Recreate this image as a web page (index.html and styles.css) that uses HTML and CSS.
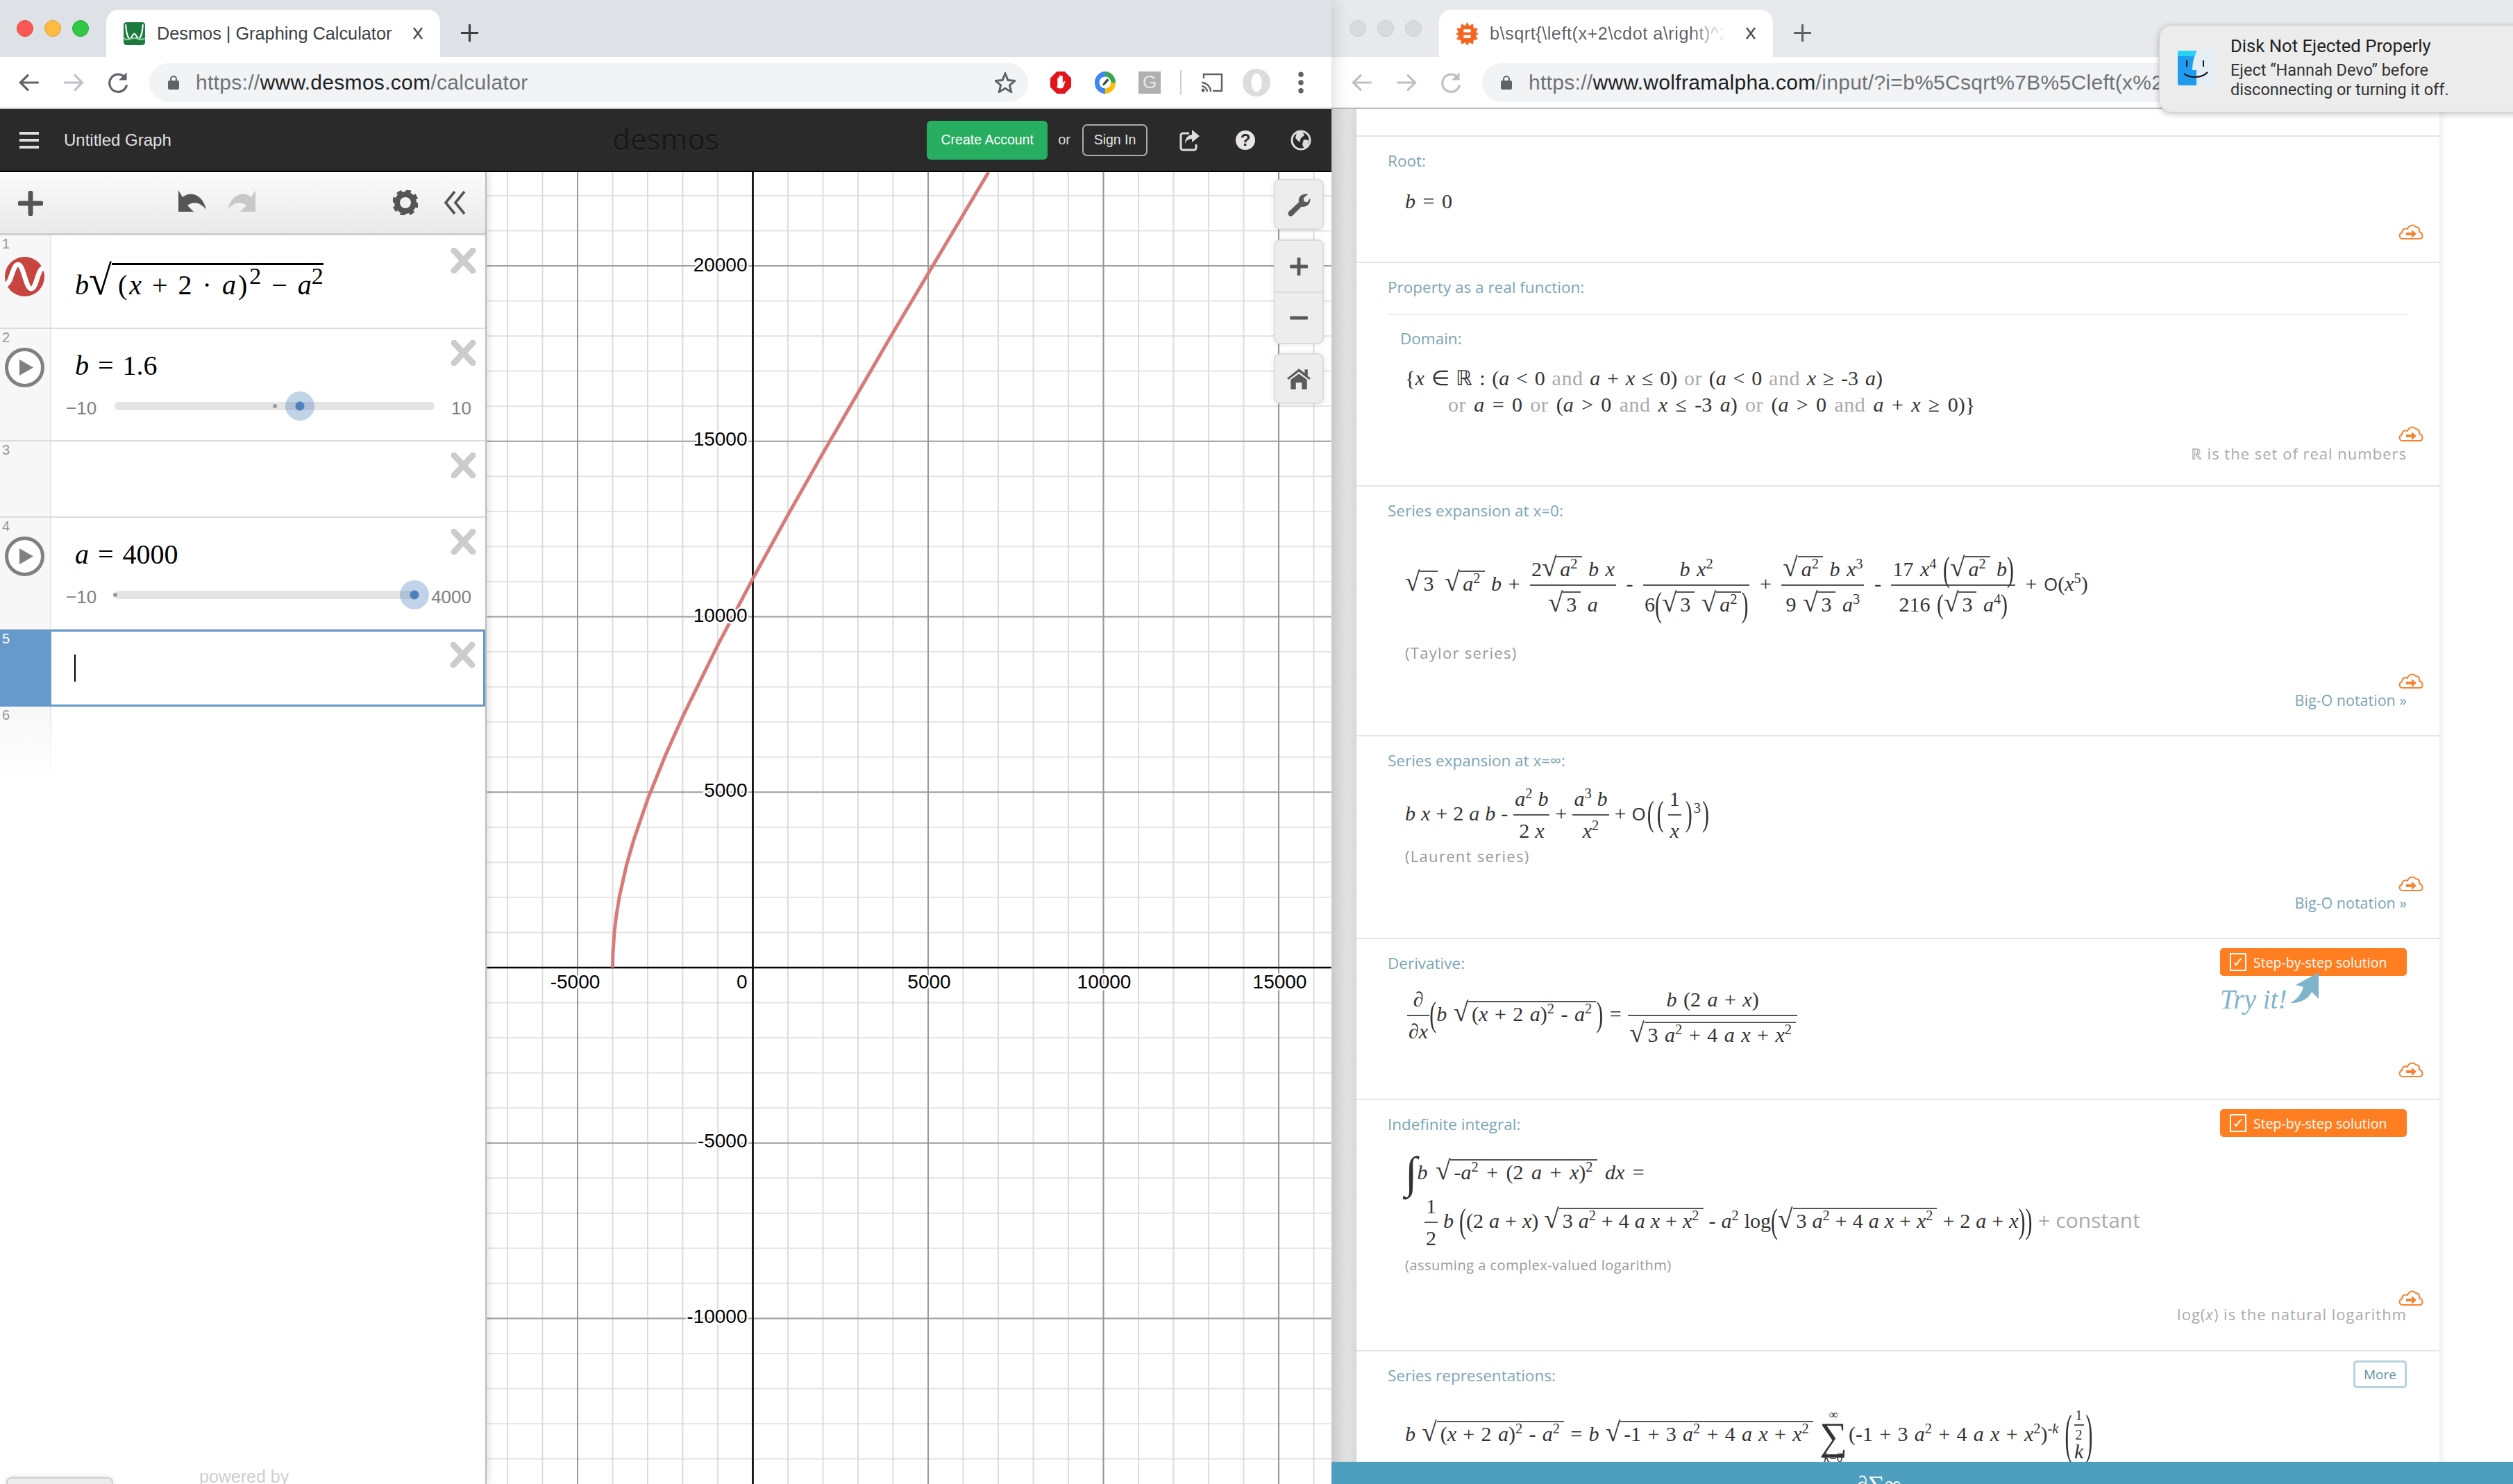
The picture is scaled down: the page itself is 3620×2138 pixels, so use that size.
FILE: index.html
```html
<!DOCTYPE html>
<html lang="en">
<head>
    <meta charset="UTF-8">
    <title>Desmos | Graphing Calculator</title>
    <link rel="stylesheet" href="styles.css">
</head>
<body>
<div class="screen">

    <!-- left browser window: desmos -->
    <div class="window win-left">
        <div class="tabstrip">
            <div class="lights">
                <span class="light red"></span><span class="light amber"></span><span class="light green"></span>
            </div>
            <div class="tab">
                <svg class="favicon" viewBox="0 0 32 32"><rect x="1" width="30" height="32" rx="4" fill="#1c7a3e"/><path d="M4 3c1 16 4 20 6 20s4-7 6-7 4 7 6 7 5-6 6-20" fill="none" stroke="#fff" stroke-width="2"/><path d="M1 22c6 5 10 0 15 0s9 5 15 0" fill="none" stroke="#8fd0a5" stroke-width="2"/></svg>
                <span class="tab-title">Desmos | Graphing Calculator</span>
                <svg class="tab-close" viewBox="0 0 16 20"><path d="M2 2l12 16M14 2L2 18" stroke="#4a4d51" stroke-width="2.4"/></svg>
            </div>
            <svg class="tab-new" viewBox="0 0 24 24"><path d="M12 0v24M0 12h24" stroke="#3c4043" stroke-width="3"/></svg>
        </div>
        <div class="toolbar">
            <span class="tb-btn"><svg viewBox="0 0 28 28"><path d="M26 14H4M13 4L3 14l10 10" class="nav-line"/></svg></span>
            <span class="tb-btn"><svg viewBox="0 0 28 28"><path d="M2 14h22M15 4l10 10-10 10" class="nav-line off"/></svg></span>
            <span class="tb-btn"><svg viewBox="0 0 28 28"><path d="M23 8a11 11 0 1 0 2 9" class="nav-line"/><path d="M25 1v10H15z" fill="#5f6368"/></svg></span>
            <div class="omnibox">
                <svg class="lock" viewBox="0 0 16 22"><path d="M4 9V6a4 4 0 0 1 8 0v3" fill="none" stroke="#5f6368" stroke-width="2"/><rect y="8" width="16" height="13" rx="2" fill="#5f6368"/></svg>
                <span class="url"><span class="dim">https://</span>www.desmos.com<span class="dim">/calculator</span></span>
                <svg class="star" viewBox="0 0 30 30"><path d="M15 2l4 9.500 10 .8-7.600 6.500 2.300 9.700L15 23.300l-8.700 5.200 2.300-9.700L1 12.300l10-.8z" fill="none" stroke="#5f6368" stroke-width="3"/></svg>
            </div>
            <span class="tb-btn first"><svg viewBox="0 0 32 34"><path d="M10 0h12l10 10v14L22 34H10L0 24V10z" fill="#e2141c"/><path d="M11 22V10h2v7-10h2v10-11h2v11-10h2v11l2-3h2l-3 9c-1 3-10 3-10-2z" fill="#fff"/></svg></span>
            <span class="tb-btn"><svg viewBox="0 0 32 34"><path d="M16 0a16 17 0 0 1 16 17H20a4 4 0 0 0-4-4z" fill="#35a853"/><path d="M32 17a16 17 0 0 1-16 17V21a4 4 0 0 0 4-4z" fill="#fbbc05"/><path d="M16 34A16 17 0 0 1 16 0v13a4 4 0 0 0 0 8z" fill="#4285f4"/><circle cx="16" cy="17" r="9" fill="#fff"/><path d="M12 22l1-4 6-7 3 2-6 7z" fill="#444"/></svg></span>
            <span class="tb-btn"><span class="ext-g">G</span></span>
            <span class="tb-sep"></span>
            <span class="tb-btn"><svg viewBox="0 0 32 28"><path d="M4 8V2h26v24H17" fill="none" stroke="#5f6368" stroke-width="2.400"/><path d="M1 14c7 0 13 6 13 13M1 19c4 0 8 4 8 8" fill="none" stroke="#5f6368" stroke-width="2.400"/><circle cx="3" cy="25" r="2.500" fill="#5f6368"/></svg></span>
            <span class="tb-btn"><span class="avatar"></span></span>
            <span class="tb-btn"><svg viewBox="0 0 8 30"><circle cx="4" cy="4" r="3.500" fill="#5f6368"/><circle cx="4" cy="15" r="3.500" fill="#5f6368"/><circle cx="4" cy="26" r="3.500" fill="#5f6368"/></svg></span>
        </div>

        <div class="dcg-header">
            <div class="dcg-left">
                <span class="burger"><i></i><i></i><i></i></span>
                <span class="graph-title">Untitled Graph</span>
            </div>
            <div class="dcg-logo">desmos</div>
            <div class="dcg-right">
                <span class="btn-create">Create Account</span>
                <span class="or">or</span>
                <span class="btn-signin">Sign In</span>
                <span class="head-icon"><svg viewBox="0 0 30 32"><path d="M14 6H5a3 3 0 0 0-3 3v18a3 3 0 0 0 3 3h16a3 3 0 0 0 3-3v-5" fill="none" stroke="#ddd" stroke-width="3"/><path d="M18 1l11 9-11 9v-5c-5 0-8 2-10 7 0-8 4-12 10-13z" fill="#ddd"/></svg></span>
                <span class="head-icon"><span class="help">?</span></span>
                <span class="head-icon"><svg viewBox="0 0 30 32"><circle cx="15" cy="16" r="13" fill="none" stroke="#ddd" stroke-width="3"/><path d="M9 5l8-2 3 6-5 4-2 6-6-6zM19 15l7 1-1 8-5 5-3-7z" fill="#ddd"/></svg></span>
            </div>
        </div>

        <div class="dcg-main">
            <div class="panel">
                <div class="panel-head">
                    <svg class="ph-icon plus" viewBox="0 0 36 36"><path d="M18 3v30M3 18h30" stroke="#555" stroke-width="7" stroke-linecap="round"/></svg>
                    <svg class="ph-icon undo" viewBox="0 0 42 36"><path d="M1 4l0 31h22L14 26c8-6 18-5 27 6C37 14 22 3 7 14z" fill="#555" transform="translate(0 -2)"/></svg>
                    <svg class="ph-icon redo" viewBox="0 0 42 36"><path d="M41 4v31H19l9-9C20 20 10 21 1 32 5 14 20 3 35 14z" fill="#c8c8c8" transform="translate(0 -2)"/></svg>
                    <svg class="ph-icon gear" viewBox="0 0 36 36"><circle cx="18" cy="18" r="12" fill="none" stroke="#555" stroke-width="8"/><circle cx="18" cy="18" r="16" fill="none" stroke="#555" stroke-width="6" stroke-dasharray="7 5.570"/></svg>
                    <svg class="ph-icon fold" viewBox="0 0 32 36"><path d="M16 2L3 18l13 16M30 2L17 18l13 16" fill="none" stroke="#555" stroke-width="3.600"/></svg>
                </div>

                <div class="row row-first">
                    <div class="num-col"><span class="num">1</span>
                        <svg class="row-icon" viewBox="0 0 57 57"><circle cx="28.500" cy="28.500" r="28.500" fill="#c74440"/><path d="M1 40C9 40 11 11 19 11S30 46 38 46 47 16 56 16" fill="none" stroke="#fff" stroke-width="7"/></svg>
                    </div>
                    <div class="row-body">
                        <div class="row-main">
                            <div class="expr expr-root"><i>b</i><span class="rad rad-big"><b>√</b><span class="rc"><span class="bp">(</span><i>x</i> + 2 · <i>a</i><span class="bp">)</span><sup>2</sup> − <i>a</i><sup>2</sup></span></span></div>
                            <svg class="close" viewBox="0 0 37 37"><path d="M5 4l27 29M32 4L5 33" stroke="#ccc" stroke-width="9" stroke-linecap="round"/></svg>
                        </div>
                    </div>
                </div>

                <div class="row">
                    <div class="num-col"><span class="num">2</span>
                        <svg class="row-icon" viewBox="0 0 57 57"><circle cx="28.500" cy="28.500" r="26" fill="#fff" stroke="#808080" stroke-width="5"/><path d="M21 17v23l20-11.500z" fill="#808080"/></svg>
                    </div>
                    <div class="row-body">
                        <div class="row-main">
                            <div class="expr"><i>b</i> = 1.6</div>
                            <svg class="close" viewBox="0 0 37 37"><path d="M5 4l27 29M32 4L5 33" stroke="#ccc" stroke-width="9" stroke-linecap="round"/></svg>
                        </div>
                        <div class="slider">
                            <span class="limit limit-min">−10</span>
                            <div class="track">
                                <span class="tick" style="left: 50%"></span>
                                <span class="thumb" style="left: 58%"></span>
                            </div>
                            <span class="limit">10</span>
                        </div>
                    </div>
                </div>

                <div class="row row-empty">
                    <div class="num-col"><span class="num">3</span></div>
                    <div class="row-body">
                        <div class="row-main">
                            <div class="expr"></div>
                            <svg class="close" viewBox="0 0 37 37"><path d="M5 4l27 29M32 4L5 33" stroke="#ccc" stroke-width="9" stroke-linecap="round"/></svg>
                        </div>
                    </div>
                </div>

                <div class="row">
                    <div class="num-col"><span class="num">4</span>
                        <svg class="row-icon" viewBox="0 0 57 57"><circle cx="28.500" cy="28.500" r="26" fill="#fff" stroke="#808080" stroke-width="5"/><path d="M21 17v23l20-11.500z" fill="#808080"/></svg>
                    </div>
                    <div class="row-body">
                        <div class="row-main">
                            <div class="expr"><i>a</i> = 4000</div>
                            <svg class="close" viewBox="0 0 37 37"><path d="M5 4l27 29M32 4L5 33" stroke="#ccc" stroke-width="9" stroke-linecap="round"/></svg>
                        </div>
                        <div class="slider">
                            <span class="limit limit-min">−10</span>
                            <div class="track track-short">
                                <span class="tick" style="left: 0.25%"></span>
                                <span class="thumb" style="left: 100%"></span>
                            </div>
                            <span class="limit">4000</span>
                        </div>
                    </div>
                </div>

                <div class="row row-active">
                    <div class="num-col"><span class="num">5</span></div>
                    <div class="row-body">
                        <div class="row-main">
                            <div class="expr"><span class="caret"></span></div>
                            <svg class="close" viewBox="0 0 37 37"><path d="M5 4l27 29M32 4L5 33" stroke="#ccc" stroke-width="9" stroke-linecap="round"/></svg>
                        </div>
                    </div>
                </div>

                <div class="row row-ghost">
                    <div class="num-col"><span class="num">6</span></div>
                </div>

                <div class="panel-foot">
                    <span class="foot-btn"></span>
                    <span class="powered">powered by</span>
                </div>
            </div>

            <div class="graph">
                <svg class="plot" viewBox="702 248 1216 1890">
                    <defs>
                        <pattern id="minor" x="1084" y="1393" width="50.500" height="50.550" patternUnits="userSpaceOnUse">
                            <rect width="50.500" height="2" fill="#e4e4e4"/>
                            <rect width="2" height="50.550" fill="#dcdcdc"/>
                        </pattern>
                        <pattern id="major" x="1084" y="1393" width="252.500" height="252.750" patternUnits="userSpaceOnUse">
                            <rect width="252.500" height="2" fill="#a0a0a0"/>
                            <rect width="2" height="252.750" fill="#989898"/>
                        </pattern>
                    </defs>
                    <rect x="702" y="248" width="1216" height="1890" fill="#fff"/>
                    <rect x="702" y="248" width="1216" height="1890" fill="url(#minor)"/>
                    <rect x="702" y="248" width="1216" height="1890" fill="url(#major)"/>
                    <path d="M1085 248V2138M702 1394H1918" stroke="#000" stroke-width="2.500"/>
                    <polyline class="curve" points="883,1394 883.500,1371 885.500,1342.700 888,1321.200 893,1290.400 903.200,1245.700 913.300,1210.300 933.500,1151.400 958.800,1088.700 984,1032.300 1034.500,929.400 1085,833.700 1135.500,741.900 1186,652.700 1287,479 1424.500,248"/>
                    <g class="ticks-y">
                        <text x="1077" y="391">20000</text>
                        <text x="1077" y="642">15000</text>
                        <text x="1077" y="896">10000</text>
                        <text x="1077" y="1148">5000</text>
                        <text x="1077" y="1424">0</text>
                        <text x="1077" y="1653">-5000</text>
                        <text x="1077" y="1906">-10000</text>
                    </g>
                    <g class="ticks-x">
                        <text x="829" y="1424">-5000</text>
                        <text x="1339" y="1424">5000</text>
                        <text x="1591" y="1424">10000</text>
                        <text x="1844" y="1424">15000</text>
                    </g>
                </svg>
                <div class="tools">
                    <div class="tool tool-wrench">
                        <svg viewBox="0 0 36 36"><path d="M2 29L18 14C16 6 23 0 32 2L25 8l1 5 5 1 4-6c2 8-5 14-13 13L8 35c-4 2-8-2-6-6z" fill="#5a5a5a"/></svg>
                    </div>
                    <div class="tool-group">
                        <div class="tool tool-half"><svg viewBox="0 0 26 26"><path d="M13 2v22M2 13h22" stroke="#5a5a5a" stroke-width="5" stroke-linecap="round"/></svg></div>
                        <div class="tool tool-half"><svg viewBox="0 0 26 26"><path d="M2 13h22" stroke="#5a5a5a" stroke-width="5" stroke-linecap="round"/></svg></div>
                    </div>
                    <div class="tool">
                        <svg viewBox="0 0 32 28"><path d="M0 13L16 0l8 6V1h4v9l4 3-2 2L16 4 2 15z" fill="#5a5a5a"/><path d="M5 15L16 7l11 8v13h-7v-9h-8v9H5z" fill="#5a5a5a"/></svg>
                    </div>
                </div>
            </div>
        </div>
    </div>

    <!-- right browser window: wolfram alpha -->
    <div class="window win-right">
        <div class="tabstrip tabstrip-off">
            <div class="lights lights-off">
                <span class="light"></span><span class="light"></span><span class="light"></span>
            </div>
            <div class="tab tab-wa">
                <svg class="favicon" viewBox="0 0 32 32"><path d="M16 0l3 5 5-3 1 6 6 1-3 5 4 2-4 3 3 5-6 1-1 6-5-3-3 5-3-5-5 3-1-6-6-1 3-5-4-3 4-2-3-5 6-1 1-6 5 3z" fill="#f4651f"/><path d="M11 10h10v4H11zM11 18h10v4H11z" fill="#fff"/></svg>
                <span class="tab-title tab-title-fade">b\sqrt{\left(x+2\cdot a\right)^2</span>
                <svg class="tab-close" viewBox="0 0 16 20"><path d="M2 2l12 16M14 2L2 18" stroke="#4a4d51" stroke-width="2.400"/></svg>
            </div>
            <svg class="tab-new" viewBox="0 0 24 24"><path d="M12 0v24M0 12h24" stroke="#5f6368" stroke-width="3"/></svg>
        </div>
        <div class="toolbar toolbar-off">
            <span class="tb-btn"><svg viewBox="0 0 28 28"><path d="M26 14H4M13 4L3 14l10 10" class="nav-line off"/></svg></span>
            <span class="tb-btn"><svg viewBox="0 0 28 28"><path d="M2 14h22M15 4l10 10-10 10" class="nav-line off"/></svg></span>
            <span class="tb-btn"><svg viewBox="0 0 28 28"><path d="M23 8a11 11 0 1 0 2 9" class="nav-line off"/><path d="M25 1v10H15z" fill="#bdc1c6"/></svg></span>
            <div class="omnibox">
                <svg class="lock" viewBox="0 0 16 22"><path d="M4 9V6a4 4 0 0 1 8 0v3" fill="none" stroke="#5f6368" stroke-width="2"/><rect y="8" width="16" height="13" rx="2" fill="#5f6368"/></svg>
                <span class="url"><span class="dim">https://</span>www.wolframalpha.com<span class="dim">/input/?i=b%5Csqrt%7B%5Cleft(x%2B2%5Ccdot%20a%5Cright)%5E2</span></span>
            </div>
        </div>

        <div class="notification">
            <svg class="finder" viewBox="0 0 52 50"><rect width="52" height="50" rx="3" fill="#e4eef6"/><path d="M3 0h24c-4 10-6 20-6 28h6l0 22H3a3 3 0 0 1-3-3V3a3 3 0 0 1 3-3z" fill="#1f9cf0"/><path d="M3 0h24l-2 8H0V3a3 3 0 0 1 3-3z" fill="#2bd0f5"/><path d="M13 14v9M37 14v9" stroke="#111" stroke-width="2"/><path d="M9 33c8 7 26 7 34-2" fill="none" stroke="#111" stroke-width="2"/></svg>
            <div class="notif-text">
                <div class="notif-title">Disk Not Ejected Properly</div>
                <div class="notif-body">Eject “Hannah Devo” before<br>disconnecting or turning it off.</div>
            </div>
        </div>

        <div class="wa-page">
            <div class="wa-card">
                <div class="pod pod-top"></div>

                <div class="pod pod-root">
                    <div class="pod-head"><span class="pod-label">Root:</span></div>
                    <div class="math math-root"><i>b</i> = 0</div>
                    <div class="pod-foot">
                        <svg class="cloud" viewBox="0 0 36 24"><path d="M6 23C1 23 0 16 5 14 5 9 10 7 13 9 15 3 22 2 25 6 30 6 31 11 30 13 36 15 36 23 30 23z" fill="none" stroke="#f7822f" stroke-width="2"/><path d="M11 14h8v-4l7 6-7 6v-4h-8z" fill="#f7822f"/></svg>
                    </div>
                </div>

                <div class="pod pod-prop">
                    <div class="pod-head"><span class="pod-label">Property as a real function:</span></div>
                    <div class="pod-rule"></div>
                    <div class="pod-label sub-label">Domain:</div>
                    <div class="math math-domain">{<i>x</i> ∈ ℝ : (<i>a</i> &lt; 0 <span class="word">and</span> <i>a</i> + <i>x</i> ≤ 0) <span class="word">or</span> (<i>a</i> &lt; 0 <span class="word">and</span> <i>x</i> ≥ -3 <i>a</i>)</div>
                    <div class="math math-domain math-indent"><span class="word">or</span> <i>a</i> = 0 <span class="word">or</span> (<i>a</i> &gt; 0 <span class="word">and</span> <i>x</i> ≤ -3 <i>a</i>) <span class="word">or</span> (<i>a</i> &gt; 0 <span class="word">and</span> <i>a</i> + <i>x</i> ≥ 0)}</div>
                    <div class="pod-foot">
                        <svg class="cloud" viewBox="0 0 36 24"><path d="M6 23C1 23 0 16 5 14 5 9 10 7 13 9 15 3 22 2 25 6 30 6 31 11 30 13 36 15 36 23 30 23z" fill="none" stroke="#f7822f" stroke-width="2"/><path d="M11 14h8v-4l7 6-7 6v-4h-8z" fill="#f7822f"/></svg>
                        <span class="note">ℝ is the set of real numbers</span>
                    </div>
                </div>

                <div class="pod pod-taylor">
                    <div class="pod-head"><span class="pod-label">Series expansion at x=0:</span></div>
                    <div class="math math-taylor">
                        <span class="rad"><b>√</b><span class="rc">3</span></span> <span class="rad"><b>√</b><span class="rc"><i>a</i><sup>2</sup></span></span> <i>b</i> +
                        <span class="frac"><span class="top"><span>2<span class="rad"><b>√</b><span class="rc"><i>a</i><sup>2</sup></span></span> <i>b x</i></span></span><span class="bot"><span><span class="rad"><b>√</b><span class="rc">3</span></span> <i>a</i></span></span></span>
                        -
                        <span class="frac"><span class="top"><span><i>b x</i><sup>2</sup></span></span><span class="bot"><span>6<span class="bp">(</span><span class="rad"><b>√</b><span class="rc">3</span></span> <span class="rad"><b>√</b><span class="rc"><i>a</i><sup>2</sup></span></span><span class="bp">)</span></span></span></span>
                        +
                        <span class="frac"><span class="top"><span><span class="rad"><b>√</b><span class="rc"><i>a</i><sup>2</sup></span></span> <i>b x</i><sup>3</sup></span></span><span class="bot"><span>9 <span class="rad"><b>√</b><span class="rc">3</span></span> <i>a</i><sup>3</sup></span></span></span>
                        -
                        <span class="frac"><span class="top"><span>17 <i>x</i><sup>4</sup> <span class="bp">(</span><span class="rad"><b>√</b><span class="rc"><i>a</i><sup>2</sup></span></span> <i>b</i><span class="bp">)</span></span></span><span class="bot"><span>216 <span class="bp-sm">(</span><span class="rad"><b>√</b><span class="rc">3</span></span> <i>a</i><sup>4</sup><span class="bp-sm">)</span></span></span></span>
                        + <span class="big-o">O</span>(<i>x</i><sup>5</sup>)
                    </div>
                    <div class="qualifier">(Taylor series)</div>
                    <div class="pod-foot">
                        <svg class="cloud" viewBox="0 0 36 24"><path d="M6 23C1 23 0 16 5 14 5 9 10 7 13 9 15 3 22 2 25 6 30 6 31 11 30 13 36 15 36 23 30 23z" fill="none" stroke="#f7822f" stroke-width="2"/><path d="M11 14h8v-4l7 6-7 6v-4h-8z" fill="#f7822f"/></svg>
                        <span class="note note-link">Big-O notation »</span>
                    </div>
                </div>

                <div class="pod pod-laurent">
                    <div class="pod-head"><span class="pod-label">Series expansion at x=∞:</span></div>
                    <div class="math math-laurent">
                        <i>b x</i> + 2 <i>a b</i> -
                        <span class="frac frac-sm"><span class="top"><span><i>a</i><sup>2</sup> <i>b</i></span></span><span class="bot"><span>2 <i>x</i></span></span></span>
                        +
                        <span class="frac frac-sm"><span class="top"><span><i>a</i><sup>3</sup> <i>b</i></span></span><span class="bot"><span><i>x</i><sup>2</sup></span></span></span>
                        + <span class="big-o">O</span><span class="bp">(</span><span class="bp">(</span><span class="frac frac-xs"><span class="top"><span>1</span></span><span class="bot"><span><i>x</i></span></span></span><span class="bp">)</span><sup>3</sup><span class="bp">)</span>
                    </div>
                    <div class="qualifier">(Laurent series)</div>
                    <div class="pod-foot">
                        <svg class="cloud" viewBox="0 0 36 24"><path d="M6 23C1 23 0 16 5 14 5 9 10 7 13 9 15 3 22 2 25 6 30 6 31 11 30 13 36 15 36 23 30 23z" fill="none" stroke="#f7822f" stroke-width="2"/><path d="M11 14h8v-4l7 6-7 6v-4h-8z" fill="#f7822f"/></svg>
                        <span class="note note-link">Big-O notation »</span>
                    </div>
                </div>

                <div class="pod pod-deriv">
                    <div class="pod-head">
                        <span class="pod-label">Derivative:</span>
                        <span class="step-btn"><span class="check">✓</span>Step-by-step solution</span>
                    </div>
                    <div class="deriv-row">
                        <div class="math math-deriv">
                            <span class="frac frac-xs"><span class="top"><span>∂</span></span><span class="bot"><span>∂<i>x</i></span></span></span><span class="bp">(</span><i>b</i> <span class="rad"><b>√</b><span class="rc">(<i>x</i> + 2 <i>a</i>)<sup>2</sup> - <i>a</i><sup>2</sup></span></span><span class="bp">)</span> =
                            <span class="frac frac-sm"><span class="top"><span><i>b</i> (2 <i>a</i> + <i>x</i>)</span></span><span class="bot"><span><span class="rad"><b>√</b><span class="rc">3 <i>a</i><sup>2</sup> + 4 <i>a x</i> + <i>x</i><sup>2</sup></span></span></span></span></span>
                        </div>
                        <div class="try-it">
                            <span>Try it!</span>
                            <svg class="try-arrow" viewBox="0 0 44 46"><path d="M42 0L9 18l11 3C18 30 10 40 1 44c13 1 27-6 31-16l10 10z" fill="#7fb4cc"/></svg>
                        </div>
                    </div>
                    <div class="pod-foot">
                        <svg class="cloud" viewBox="0 0 36 24"><path d="M6 23C1 23 0 16 5 14 5 9 10 7 13 9 15 3 22 2 25 6 30 6 31 11 30 13 36 15 36 23 30 23z" fill="none" stroke="#f7822f" stroke-width="2"/><path d="M11 14h8v-4l7 6-7 6v-4h-8z" fill="#f7822f"/></svg>
                    </div>
                </div>

                <div class="pod pod-integral">
                    <div class="pod-head">
                        <span class="pod-label">Indefinite integral:</span>
                        <span class="step-btn"><span class="check">✓</span>Step-by-step solution</span>
                    </div>
                    <div class="math math-int1"><span class="bigop">∫</span><i>b</i> <span class="rad"><b>√</b><span class="rc">-<i>a</i><sup>2</sup> + (2 <i>a</i> + <i>x</i>)<sup>2</sup></span></span> <i>dx</i> =</div>
                    <div class="math math-int2">
                        <span class="frac frac-sm"><span class="top"><span>1</span></span><span class="bot"><span>2</span></span></span> <i>b</i> <span class="bp">(</span>(2 <i>a</i> + <i>x</i>) <span class="rad"><b>√</b><span class="rc">3 <i>a</i><sup>2</sup> + 4 <i>a x</i> + <i>x</i><sup>2</sup></span></span> - <i>a</i><sup>2</sup> log<span class="bp">(</span><span class="rad"><b>√</b><span class="rc">3 <i>a</i><sup>2</sup> + 4 <i>a x</i> + <i>x</i><sup>2</sup></span></span> + 2 <i>a</i> + <i>x</i><span class="bp">)</span><span class="bp">)</span><span class="constant"> + constant</span>
                    </div>
                    <div class="qualifier qualifier-int">(assuming a complex-valued logarithm)</div>
                    <div class="pod-foot">
                        <svg class="cloud" viewBox="0 0 36 24"><path d="M6 23C1 23 0 16 5 14 5 9 10 7 13 9 15 3 22 2 25 6 30 6 31 11 30 13 36 15 36 23 30 23z" fill="none" stroke="#f7822f" stroke-width="2"/><path d="M11 14h8v-4l7 6-7 6v-4h-8z" fill="#f7822f"/></svg>
                        <span class="note note-log">log(<i>x</i>) is the natural logarithm</span>
                    </div>
                </div>

                <div class="pod pod-rep">
                    <div class="pod-head">
                        <span class="pod-label">Series representations:</span>
                        <span class="more-btn">More</span>
                    </div>
                    <div class="math math-rep">
                        <i>b</i> <span class="rad"><b>√</b><span class="rc">(<i>x</i> + 2 <i>a</i>)<sup>2</sup> - <i>a</i><sup>2</sup></span></span> = <i>b</i> <span class="rad"><b>√</b><span class="rc">-1 + 3 <i>a</i><sup>2</sup> + 4 <i>a x</i> + <i>x</i><sup>2</sup></span></span>
                        <span class="sum"><span class="sum-lim">∞</span><span class="sum-sign">∑</span><span class="sum-lim"><i>k</i>=0</span></span>(-1 + 3 <i>a</i><sup>2</sup> + 4 <i>a x</i> + <i>x</i><sup>2</sup>)<sup>-<i>k</i></sup> <span class="bp bp-tall">(</span><span class="binom"><span class="frac frac-tiny"><span class="top"><span>1</span></span><span class="bot"><span>2</span></span></span><i>k</i></span><span class="bp bp-tall">)</span>
                    </div>
                </div>
            </div>
        </div>

        <div class="wa-bar"><span class="wa-bar-logo">∂∑∞</span></div>
    </div>
</div>
</body>
</html>
```

FILE: styles.css
```css
* {
    margin: 0;
    padding: 0;
    box-sizing: border-box;
}

html, body {
    width: 3620px;
    height: 2138px;
    overflow: hidden;
    background: white;
}

body {
    font-family: 'Liberation Sans', Arial, sans-serif;
}

.screen {
    display: flex;
    width: 3620px;
    height: 2138px;
}

.window {
    display: flex;
    flex-direction: column;
    height: 100%;
    overflow: hidden;
}

.win-left {
    width: 1918px;
    flex: none;
    position: relative;
    z-index: 2;
    box-shadow: 0 0 24px rgba(0,0,0,0.18);
}

.win-right {
    flex: 1;
    position: relative;
    min-width: 0;
}

/* browser chrome */

.tabstrip {
    display: flex;
    align-items: flex-end;
    height: 82px;
    flex: none;
    background: #dee1e6;
}

.tabstrip-off {
    background: #e7e9ec;
}

.lights {
    display: flex;
    gap: 16px;
    width: 153px;
    height: 82px;
    padding: 29px 0 0 24px;
    flex: none;
}

.lights-off {
    width: 155px;
    padding-left: 26px;
}

.light {
    width: 24px;
    height: 24px;
    border-radius: 50%;
    background: #d9dadb;
    border: 1px solid #cfcfcf;
}

.light.red { background: #fc5753; border-color: #df4744; }
.light.amber { background: #fdbc40; border-color: #de9f34; }
.light.green { background: #33c748; border-color: #27aa35; }

.tab {
    display: flex;
    align-items: center;
    width: 481px;
    height: 68px;
    padding: 0 24px 0 24px;
    background: white;
    border-radius: 18px 18px 0 0;
    flex: none;
}

.favicon {
    width: 33px;
    height: 33px;
    flex: none;
    margin-right: 16px;
}

.tab-title {
    flex: 1;
    font-family: 'Liberation Sans', sans-serif;
    font-size: 25.300px;
    color: #3c4043;
    white-space: nowrap;
    overflow: hidden;
}

.tab-title-fade {
    color: #5f6368;
    letter-spacing: 0.500px;
    -webkit-mask-image: linear-gradient(90deg, black 85%, transparent 100%);
    mask-image: linear-gradient(90deg, black 85%, transparent 100%);
}

.tab-close {
    width: 16px;
    height: 20px;
    flex: none;
    margin-left: 28px;
}

.tab-new {
    width: 25px;
    height: 25px;
    margin: 0 0 22px 30px;
    flex: none;
}

.toolbar {
    display: flex;
    align-items: center;
    height: 75px;
    flex: none;
    padding: 0 12px 0 10px;
    background: white;
    border-bottom: 2px solid #c8c8c8;
    margin-top: 0;
}

.toolbar-off {
    padding-left: 12px;
    border-bottom-color: #bbb;
}

.tb-btn {
    display: flex;
    align-items: center;
    justify-content: center;
    width: 64px;
    height: 56px;
    flex: none;
}

.tb-btn svg {
    height: 32px;
    width: 32px;
}

.tb-btn.first {
    margin-left: 15px;
}

.tb-sep {
    width: 2px;
    height: 36px;
    margin: 0 12px;
    background: #d0d0d0;
    flex: none;
}

.nav-line {
    fill: none;
    stroke: #5f6368;
    stroke-width: 2.800;
}

.nav-line.off {
    stroke: #bdc1c6;
}

.omnibox {
    display: flex;
    align-items: center;
    flex: 1;
    min-width: 0;
    height: 56px;
    margin-left: 13px;
    padding: 0 18px 0 27px;
    background: #f1f3f4;
    border-radius: 28px;
    overflow: hidden;
}

.lock {
    width: 16px;
    height: 22px;
    flex: none;
    margin-right: 24px;
}

.url {
    flex: 1;
    font-size: 30px;
    letter-spacing: 0.300px;
    color: #202124;
    white-space: nowrap;
    overflow: hidden;
}

.url .dim {
    color: #6f7377;
}

.star {
    width: 30px;
    height: 30px;
    flex: none;
}

.ext-g {
    display: flex;
    align-items: center;
    justify-content: center;
    width: 32px;
    height: 32px;
    background: #b0b0b0;
    color: #e8e8e8;
    font-size: 26px;
}

.avatar {
    width: 40px;
    height: 40px;
    border-radius: 50%;
    background: radial-gradient(ellipse 8px 14px at 50% 50%, #fff 90%, #dcdcdc 100%);
}

/* desmos header */

.dcg-header {
    display: grid;
    grid-template-columns: 1fr auto 1fr;
    align-items: center;
    height: 91px;
    flex: none;
    background: #2a2a2a;
    border-bottom: 2px solid #000;
}

.dcg-left {
    display: flex;
    align-items: center;
}

.burger {
    display: flex;
    flex-direction: column;
    gap: 6px;
    width: 28px;
    margin: 0 36px 0 28px;
}

.burger i {
    display: block;
    height: 4px;
    background: #ddd;
}

.graph-title {
    font-size: 24px;
    color: #e0e0e0;
}

.dcg-logo {
    font-family: 'Open Sans', sans-serif;
    font-size: 42px;
    line-height: 50px;
    color: #181818;
    text-shadow: 0 1px 1px #3a3a3a;
    margin-top: -4px;
}

.dcg-right {
    display: flex;
    align-items: center;
    justify-content: flex-end;
    padding-right: 4px;
}

.btn-create {
    display: flex;
    align-items: center;
    justify-content: center;
    width: 174px;
    height: 56px;
    background: #27ae60;
    border-radius: 6px;
    color: white;
    font-size: 19.500px;
}

.or {
    margin: 0 17px 0 15px;
    font-size: 20px;
    color: #ddd;
}

.btn-signin {
    display: flex;
    align-items: center;
    justify-content: center;
    width: 94px;
    height: 46px;
    border: 2px solid #aaa;
    border-radius: 7px;
    color: #e6e6e6;
    font-size: 19.500px;
    margin-right: 21px;
}

.head-icon {
    display: flex;
    align-items: center;
    justify-content: center;
    width: 80px;
}

.head-icon svg {
    width: 30px;
    height: 32px;
}

.help {
    display: flex;
    align-items: center;
    justify-content: center;
    width: 28px;
    height: 28px;
    border-radius: 50%;
    background: #e6e6e6;
    color: #2a2a2a;
    font-size: 24px;
    font-weight: bold;
}

/* expression list */

.dcg-main {
    display: flex;
    flex: 1;
    min-height: 0;
}

.panel {
    display: flex;
    flex-direction: column;
    width: 701px;
    flex: none;
    background: white;
    border-right: 2px solid #bdbdbd;
    position: relative;
    z-index: 1;
    box-shadow: 2px 0 10px rgba(0,0,0,0.15);
}

.panel-head {
    display: flex;
    align-items: center;
    height: 91px;
    flex: none;
    background: linear-gradient(#fbfbfb, #e9e9e9);
    border-bottom: 3px solid #cdcdcd;
}

.ph-icon {
    flex: none;
    height: 36px;
}

.plus { width: 36px; margin-left: 26px; margin-top: 2px; }
.undo { width: 42px; margin-left: 194px; margin-top: -4px; }
.redo { width: 42px; margin-left: 29px; margin-top: -4px; }
.gear { width: 36px; margin-left: 197px; }
.fold { width: 32px; margin-left: 37px; }

.row {
    display: flex;
    flex: none;
    height: 162px;
    border-bottom: 2px solid #dcdcdc;
}

.row-first { height: 135px; }
.row-empty { height: 110px; }

.num-col {
    display: flex;
    flex-direction: column;
    width: 74px;
    flex: none;
    background: #f7f7f7;
    border-right: 2px solid #e8e8e8;
}

.num {
    height: 24px;
    padding: 1px 0 0 3px;
    font-size: 20px;
    line-height: 22px;
    color: #999;
}

.row-icon {
    width: 57px;
    height: 57px;
    margin: 0 0 0 7px;
}

.row-first .row-icon { margin-top: 7px; }
.row:not(.row-first) .row-icon { margin-top: 3px; }

.row-body {
    flex: 1;
    min-width: 0;
}

.row-main {
    display: flex;
    justify-content: space-between;
    padding-right: 13px;
}

.close {
    width: 37px;
    height: 37px;
    margin-top: 16px;
    flex: none;
}

.row-first .close {
    margin-top: 18px;
}

.expr {
    padding: 30px 0 0 34px;
    font-family: 'Liberation Serif', serif;
    font-size: 40px;
    line-height: 46px;
    word-spacing: 3px;
    color: black;
    white-space: nowrap;
}

.slider {
    display: flex;
    align-items: center;
    height: 30px;
    margin-top: 20px;
    padding: 0 20px 0 21px;
}

.limit {
    font-size: 26px;
    line-height: 30px;
    padding-top: 5px;
    color: #808080;
    flex: none;
}

.limit-min {
    width: 70px;
}

.track {
    position: relative;
    flex: 1;
    height: 12px;
    margin-right: 24px;
    background: #e4e4e4;
    border-radius: 6px;
}

.tick {
    position: absolute;
    top: 3px;
    width: 6px;
    height: 6px;
    margin-left: -3px;
    border-radius: 50%;
    background: #999;
}

.thumb {
    position: absolute;
    top: -15px;
    width: 42px;
    height: 42px;
    margin-left: -21px;
    border-radius: 50%;
    background: radial-gradient(circle, #4f81bd 6px, rgba(79,129,189,0.35) 7px);
}

.expr-root {
    padding-top: 35px;
    line-height: 52px;
    word-spacing: 5px;
}

.bp {
    display: inline-block;
    transform: scale(1, 1.700);
    font-weight: normal;
}

.bp-sm {
    display: inline-block;
    transform: scale(1, 1.300);
}

.bp-tall {
    transform: scale(1, 2.600);
}

.expr .bp {
    transform: none;
    margin: 0 3px;
}

.rad {
    white-space: nowrap;
}

.rad > b {
    font-weight: normal;
    display: inline-block;
    font-size: 1.300em;
    line-height: 1;
}

.rc {
    display: inline-block;
    border-top: 2px solid #555;
    line-height: 1.100;
    padding: 0 6px 0 5px;
}

.expr .rc {
    border-top-color: black;
    border-top-width: 3px;
    padding: 7px 0 0 6px;
}

.rad-big > b {
    font-size: 1.500em;
}

sup {
    font-size: 0.680em;
    line-height: 0;
    vertical-align: 0.550em;
}

.expr sup {
    font-size: 0.850em;
    vertical-align: 0.450em;
}

.row-active {
    height: 111px;
    margin-top: -1px;
    border: 3px solid #6699cc;
    border-left: 0;
}

.row-active .num-col {
    width: 74px;
    background: #6699cc;
    border-right: 0;
}

.row-active .num {
    color: white;
    margin-top: -2px;
}

.row-active .close {
    margin-top: 15px;
}

.row-active .row-main {
    padding-right: 11px;
}

.caret {
    display: block;
    width: 2px;
    height: 39px;
    background: black;
    margin-left: -1px;
    margin-top: 3px;
}

.row-ghost {
    height: 104px;
    border-bottom: 0;
}

.row-ghost .num-col {
    background: linear-gradient(#f7f7f7, white);
    border-right-color: transparent;
    border-image: linear-gradient(#e8e8e8, white) 1;
}

.panel-foot {
    display: flex;
    margin-top: auto;
    height: 22px;
    flex: none;
    padding-left: 9px;
}

.foot-btn {
    width: 154px;
    height: 30px;
    margin-top: 12px;
    background: #ececec;
    border: 2px solid #cfcfcf;
    border-radius: 8px;
    box-shadow: 0 0 8px rgba(0,0,0,0.12);
}

.powered {
    margin-left: 124px;
    font-size: 25px;
    line-height: 22px;
    color: #cfcfcf;
}

/* graph */

.graph {
    position: relative;
    flex: 1;
    min-width: 0;
    overflow: hidden;
}

.plot {
    display: block;
    width: 100%;
    height: 100%;
}

.curve {
    fill: none;
    stroke: #d97a7a;
    stroke-width: 5;
}

.plot text {
    font-family: 'Liberation Sans', sans-serif;
    font-size: 28px;
    fill: black;
    stroke: white;
    stroke-width: 5px;
    paint-order: stroke;
}

.ticks-y text { text-anchor: end; }
.ticks-x text { text-anchor: middle; }

.tools {
    position: absolute;
    top: 10px;
    right: 11px;
    display: flex;
    flex-direction: column;
    gap: 13px;
}

.tool, .tool-group {
    background: #ededed;
    border: 2px solid #dcdcdc;
    border-radius: 9px;
    box-shadow: 0 0 8px rgba(0,0,0,0.1);
}

.tool {
    display: flex;
    align-items: center;
    justify-content: center;
    width: 72px;
    height: 73px;
}

.tool-wrench {
    margin-bottom: 1px;
}

.tool svg {
    width: 34px;
    height: 34px;
}

.tool-group .tool {
    border: 0;
    box-shadow: none;
    background: none;
    border-radius: 0;
    width: 68px;
    height: 73px;
}

.tool-group .tool + .tool {
    height: 74px;
    border-top: 2px solid #dcdcdc;
}

.tool-half svg {
    width: 26px;
    height: 26px;
}

/* notification */

.notification {
    position: absolute;
    top: 36px;
    right: -20px;
    left: 1192px;
    height: 126px;
    display: flex;
    align-items: center;
    z-index: 5;
    background: #ececec;
    border-radius: 18px;
    border: 1px solid #d4d4d4;
    box-shadow: 0 2px 8px rgba(0,0,0,0.25);
}

.finder {
    width: 52px;
    height: 50px;
    margin: -2px 24px 0 26px;
    flex: none;
}

.notif-text {
    margin-top: -4px;
}

.notif-title {
    font-family: 'Roboto', sans-serif;
    font-size: 25.700px;
    font-weight: 400;
    line-height: 30px;
    color: #222;
    margin-bottom: 6px;
}

.notif-body {
    font-family: 'Roboto', sans-serif;
    font-size: 23.500px;
    line-height: 28px;
    color: #333;
}

/* wolfram alpha page */

.wa-page {
    flex: 1;
    min-height: 0;
    overflow: hidden;
    padding-left: 36px;
    background: linear-gradient(90deg, #dcdcdc 0, #e4e4e4 36px, white 36px);
}

.wa-card {
    width: 1560px;
    min-height: 100%;
    background: white;
    box-shadow: 0 0 14px rgba(0,0,0,0.12);
}

.pod {
    display: flex;
    flex-direction: column;
    padding: 20px 47px 0 45px;
    border-bottom: 2px solid #e4e4e4;
    flex: none;
}

.pod-top { height: 40px; }
.pod-root { height: 182px; }
.pod-prop { height: 322px; }
.pod-taylor { height: 360px; }
.pod-laurent { height: 292px; }
.pod-deriv { height: 232px; }
.pod-integral { height: 362px; }
.pod-rep { height: 260px; border-bottom: 0; }

.pod-head {
    display: flex;
    justify-content: space-between;
    align-items: flex-start;
    height: 30px;
    flex: none;
}

.pod-label {
    font-family: 'Open Sans', sans-serif;
    font-size: 22.500px;
    line-height: 30px;
    color: #7ba5b5;
    white-space: nowrap;
}

.pod-rule {
    height: 2px;
    margin-top: 23px;
    background: #e6f0f3;
    flex: none;
}

.sub-label {
    margin: 19px 0 0 18px;
}

.math {
    font-family: 'Liberation Serif', serif;
    font-size: 30px;
    word-spacing: 2px;
    color: #333;
    white-space: nowrap;
    flex: none;
}

.math-root {
    margin: 23px 0 0 25px;
    line-height: 40px;
    word-spacing: 3px;
}

.math-domain {
    margin: 23px 0 0 25px;
    line-height: 38px;
    word-spacing: 2.300px;
}

.math-indent {
    margin: 0 0 0 87px;
    word-spacing: 3.850px;
}

.word {
    color: #aaa;
    letter-spacing: 0.500px;
}

.pod-foot {
    display: flex;
    flex-direction: column;
    align-items: flex-end;
    margin-top: auto;
}

.pod-root .pod-foot { padding-bottom: 32px; margin-right: -24px; }

.cloud {
    width: 36px;
    height: 24px;
    flex: none;
    margin-right: -24px;
}

.pod-root .cloud { margin-right: 0; }

.note {
    font-family: 'Open Sans', sans-serif;
    font-size: 22px;
    line-height: 30px;
    letter-spacing: 1px;
    color: #aaa;
    margin-top: 2px;
}

.note-link {
    font-size: 21.500px;
    color: #7ba5b5;
    letter-spacing: 0;
}

.pod-prop .pod-foot { padding-bottom: 31px; }
.pod-taylor .pod-foot { padding-bottom: 35px; }
.pod-laurent .pod-foot { padding-bottom: 35px; }
.pod-deriv .pod-foot { padding-bottom: 31px; }
.pod-integral .pod-foot { padding-bottom: 37px; }
.note-log { margin-top: -3px; }

.frac {
    display: inline-flex;
    flex-direction: column;
    vertical-align: middle;
    text-align: center;
    line-height: 1.200;
}

.frac .top, .frac .bot {
    display: flex;
    justify-content: center;
    align-items: flex-end;
    height: 68px;
    padding: 0 2px;
}

.frac .top {
    border-bottom: 2px solid #555;
    padding-bottom: 4px;
}

.frac .bot {
    align-items: flex-start;
    padding-top: 4px;
}

.frac-sm .top, .frac-sm .bot { height: 46px; }
.frac-xs .top, .frac-xs .bot { height: 36px; }
.frac-tiny .top, .frac-tiny .bot { height: 22px; font-size: 20px; line-height: 18px; }

.big-o {
    font-family: 'Open Sans', sans-serif;
    font-size: 26px;
}

.math-taylor {
    margin: 22px 0 0 25px;
    height: 136px;
    line-height: 136px;
}

.math-taylor > .frac {
    margin: 0 5px;
}

.qualifier {
    margin: 16px 0 0 25px;
    font-family: 'Open Sans', sans-serif;
    font-size: 22px;
    line-height: 30px;
    letter-spacing: 1.300px;
    color: #999;
}

.math-laurent {
    margin: 15px 0 0 25px;
    height: 92px;
    line-height: 92px;
    word-spacing: 0.500px;
}

.math-laurent .frac-xs {
    margin: 0 4px;
}

.math-laurent .bp {
    margin: 0 2px;
}

.pod-laurent .qualifier {
    margin-top: 0;
}

.step-btn {
    display: flex;
    align-items: center;
    width: 269px;
    height: 40px;
    margin: -7px 0 0 0;
    padding-left: 14px;
    background: #ff7e22;
    border-radius: 5px;
    color: white;
    font-family: 'Open Sans', sans-serif;
    font-size: 19.500px;
    white-space: nowrap;
}

.check {
    display: flex;
    align-items: center;
    justify-content: center;
    width: 24px;
    height: 26px;
    margin-right: 10px;
    border: 2px solid white;
    font-size: 20px;
    line-height: 20px;
}

.deriv-row {
    display: flex;
    justify-content: space-between;
    height: 116px;
    flex: none;
}

.math-deriv {
    margin-left: 28px;
    line-height: 116px;
    word-spacing: 2px;
}

.try-it {
    display: flex;
    align-items: flex-start;
    width: 269px;
    color: #7fb4cc;
    font-family: 'Liberation Serif', serif;
    font-style: italic;
    font-size: 39px;
    line-height: 50px;
    padding-top: 12px;
}

.try-arrow {
    width: 44px;
    height: 46px;
    margin: -14px 0 0 4px;
}

.math-int1 {
    margin: 18px 0 0 25px;
    height: 72px;
    line-height: 72px;
    word-spacing: 4px;
}

.bigop {
    display: inline-block;
    font-size: 64px;
    line-height: 40px;
    vertical-align: -12px;
}

.math-int2 {
    margin: -9px 0 0 53px;
    height: 70px;
    line-height: 70px;
    word-spacing: 0.500px;
}

.constant {
    font-family: 'Open Sans', sans-serif;
    font-size: 30px;
    color: #aaa;
}

.qualifier-int {
    margin-top: 22px;
    font-size: 20px;
    letter-spacing: 0.500px;
}

.more-btn {
    display: flex;
    align-items: center;
    justify-content: center;
    width: 77px;
    height: 40px;
    margin-top: -7px;
    border: 3px solid #b5d4e0;
    border-radius: 5px;
    font-family: 'Open Sans', sans-serif;
    font-size: 19px;
    color: #5d8fa3;
}

.math-rep {
    margin: 19px 0 0 25px;
    height: 100px;
    line-height: 100px;
    word-spacing: 1.800px;
}

.sum {
    display: inline-flex;
    flex-direction: column;
    align-items: center;
    vertical-align: middle;
    line-height: 1;
    margin-right: 2px;
}

.sum-sign {
    font-size: 56px;
    line-height: 44px;
}

.sum-lim {
    font-size: 18px;
    line-height: 18px;
}

.binom {
    display: inline-flex;
    flex-direction: column;
    align-items: center;
    vertical-align: middle;
    line-height: 30px;
    margin: 0 3px;
}

.wa-bar {
    height: 32px;
    flex: none;
    position: relative;
    z-index: 3;
    background: #4d9ebf;
    text-align: center;
    overflow: hidden;
}

.wa-bar-logo {
    font-family: 'Liberation Serif', serif;
    font-size: 34px;
    line-height: 66px;
    color: white;
    margin-right: 126px;
}
```
